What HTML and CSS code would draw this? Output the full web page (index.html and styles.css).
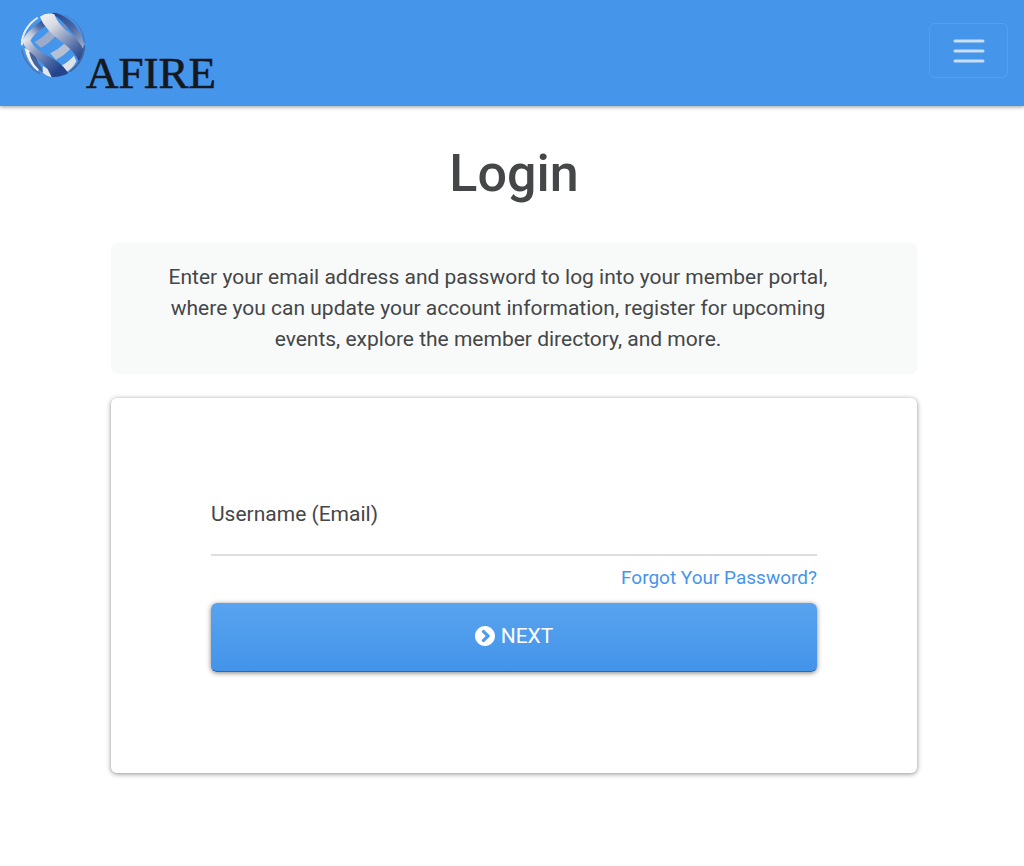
FILE: index.html
```html
<!DOCTYPE html>
<html lang="en">
<head>
  <meta charset="UTF-8" />
  <meta name="viewport" content="width=device-width, initial-scale=1.0"/>
  <title>Login</title>
  <link rel="stylesheet" href="styles.css">
</head>
<body>
  <header class="navbar">
    <a class="brand" href="#" aria-label="AFIRE">
      <svg class="brand-logo" width="200" height="92" viewBox="0 0 200 92">
        <defs>
          <clipPath id="globe"><circle cx="114" cy="111" r="97"/></clipPath>
          <linearGradient id="bandFront" gradientUnits="userSpaceOnUse" x1="85" y1="20" x2="200" y2="150">
            <stop offset="0" stop-color="#f1f1f1"/>
            <stop offset="0.25" stop-color="#d8dbe1"/>
            <stop offset="0.55" stop-color="#8c9dc2"/>
            <stop offset="0.8" stop-color="#4a66a2"/>
            <stop offset="1" stop-color="#27468b"/>
          </linearGradient>
          <linearGradient id="bandLow" gradientUnits="userSpaceOnUse" x1="30" y1="90" x2="145" y2="205">
            <stop offset="0" stop-color="#eceef0"/>
            <stop offset="0.3" stop-color="#8f9fc3"/>
            <stop offset="0.6" stop-color="#4f6ba7"/>
            <stop offset="0.85" stop-color="#24458c"/>
          </linearGradient>
          <linearGradient id="bandTop" gradientUnits="userSpaceOnUse" x1="115" y1="15" x2="205" y2="120">
            <stop offset="0" stop-color="#24458c"/>
            <stop offset="0.5" stop-color="#4767a6"/>
            <stop offset="1" stop-color="#a3aec6"/>
          </linearGradient>
          <linearGradient id="bandBack" gradientUnits="userSpaceOnUse" x1="28" y1="110" x2="90" y2="35">
            <stop offset="0" stop-color="#f1f1f1"/>
            <stop offset="0.4" stop-color="#bdc7d9"/>
            <stop offset="0.7" stop-color="#5472ad"/>
            <stop offset="1" stop-color="#27498f"/>
          </linearGradient>
        </defs>
        <g transform="translate(-5 -4) scale(0.3333)">
          <g clip-path="url(#globe)">
            <!-- bands running up to the right -->
            <path fill="url(#bandBack)" d="M22 98Q34 70 82 36L92 54Q67 67 49 93L36 120Z"/>
            <path fill="#9dabca" d="M58 102Q84 89 104 66L122 83Q103 106 78 119Z"/>
            <path fill="#b5c0d4" d="M106 136Q131 124 150 105L168 120Q148 143 123 155Z"/>
            <path fill="#dfe2e6" d="M137 174Q158 164 177 143L184 160Q174 181 151 194Z"/>
            <path fill="#748dbd" d="M137 53L158 41L165 48L148 65Z"/>
            <!-- bands running down to the right -->
            <path fill="url(#bandTop)" d="M113 12Q151 20 178 49Q201 77 209 119L199 122Q188 94 170 74Q145 38 113 18Z"/>
            <path fill="url(#bandFront)" d="M75 26Q94 11 118 19Q126 43 151 65Q189 89 207 128Q205 147 193 162Q180 133 152 111Q106 77 96 61Q82 46 75 26Z"/>
            <path fill="url(#bandLow)" d="M20 96L45 96Q63 126 88 138Q133 156 162 197Q137 212 108 207Q95 174 71 157Q36 135 20 96Z"/>
            <path fill="#eef0f1" d="M28 119L44 128Q49 157 73 182L68 190Q38 165 28 119Z"/>
            <path fill="#e1e5eb" d="M84 174L97 182L111 209Q91 203 82 193Z"/>
            <path fill="#476399" d="M42 130L62 146Q68 166 81 180L84 194Q50 173 42 130Z"/>
            <path fill="none" stroke="#e7eaee" stroke-width="7" d="M20 112Q20 62 68 28"/>
            <path fill="none" stroke="#5672a8" stroke-width="5" d="M19 125Q31 173 76 199"/>
            <path fill="none" stroke="#5474b0" stroke-width="5" d="M150 21Q202 42 209 103"/>
            <path fill="none" stroke="#42609d" stroke-width="6" d="M165 192Q205 163 209 112"/>
          </g>
        </g>
        <text class="brand-text" x="66" y="76">AFIRE</text>
      </svg>
    </a>
    <button class="menu-button" type="button" aria-label="Menu">
      <svg width="32" height="26" viewBox="0 0 32 26">
        <path d="M2 3H30M2 13H30M2 23H30"/>
      </svg>
    </button>
  </header>

  <main class="container">
    <h1 class="title">Login</h1>

    <p class="intro">Enter your email address and password to log into your member portal, where you can update your account information, register for upcoming events, explore the member directory, and more.</p>

    <form class="card">
      <label class="field-label" for="username">Username (Email)</label>
      <input class="field-input" id="username" type="email" />
      <a class="forgot-link" href="#">Forgot Your Password?</a>
      <button class="next-button" type="button">
        <svg width="20" height="20" viewBox="0 0 512 512">
          <path fill="currentColor" d="M256 0c141 0 256 115 256 256S397 512 256 512 0 397 0 256 115 0 256 0zm118 239L234 103c-9-9-25-9-34 0l-22 22c-9 9-9 25 0 34l97 97-97 97c-9 9-9 25 0 34l22 22c9 9 25 9 34 0l140-136c10-9 10-25 0-34z"/>
        </svg>
        NEXT
      </button>
    </form>
  </main>
</body>
</html>
```
FILE: styles.css
```css
* {
  box-sizing: border-box;
}

body {
  margin: 0;
  font-family: Roboto, Arial, sans-serif;
  font-size: 21px;
  line-height: 31px;
  color: #444648;
  background-color: #fff;
}

.navbar {
  display: flex;
  justify-content: space-between;
  align-items: flex-start;
  padding: 12px 16px 2px 20px;
  background-color: #4595eb;
  box-shadow: 0 1px 4px rgba(0, 0, 0, 0.4);
}

.brand-logo {
  display: block;
}

.brand-text {
  font-family: "Liberation Serif", "Times New Roman", serif;
  font-size: 45px;
  fill: #15181c;
  stroke: #15181c;
  stroke-width: 0.6;
}

.menu-button {
  display: flex;
  align-items: center;
  justify-content: center;
  width: 79px;
  height: 55px;
  margin-top: 11px;
  padding: 0;
  background: none;
  border: 1px solid rgba(255, 255, 255, 0.1);
  border-radius: 6px;
  cursor: pointer;
}

.menu-button svg {
  fill: none;
  stroke: #c9def8;
  stroke-width: 3;
  stroke-linecap: round;
}

.container {
  padding: 0 107px 40px 111px;
}

.title {
  margin: 0;
  padding: 35px 0 36px;
  font-size: 52px;
  font-weight: 500;
  line-height: 66px;
  text-align: center;
}

.intro {
  margin: 0 0 24px;
  padding: 19px 72px 19px 40px;
  background-color: #f8faf9;
  border-radius: 6px;
  text-align: center;
}

.card {
  display: flex;
  flex-direction: column;
  padding: 101px 100px;
  background-color: #fff;
  border-radius: 6px;
  box-shadow: 0 1px 5px rgba(0, 0, 0, 0.45);
}

.field-input {
  width: 100%;
  height: 26px;
  padding: 0;
  font: inherit;
  color: inherit;
  background: none;
  border: none;
  border-bottom: 2px solid #dedede;
  outline: none;
}

.forgot-link {
  align-self: flex-end;
  margin: 6px 0 10px;
  font-size: 19px;
  color: #4595eb;
  text-decoration: none;
}

.next-button {
  display: flex;
  align-items: center;
  justify-content: center;
  gap: 6px;
  height: 69px;
  padding: 0 0 2px;
  font-family: inherit;
  font-size: 21px;
  color: #fff;
  background: linear-gradient(#59a3ef, #4394ea);
  border: none;
  border-bottom: 1px solid #2e66b0;
  border-radius: 6px;
  box-shadow: 0 1px 5px rgba(0, 0, 0, 0.5);
  cursor: pointer;
}
```
